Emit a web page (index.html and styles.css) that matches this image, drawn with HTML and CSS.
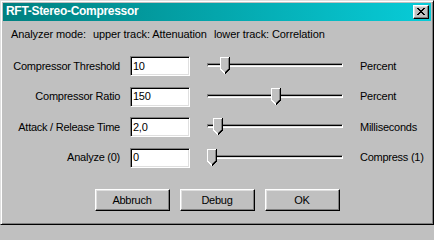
FILE: index.html
```html
<!DOCTYPE html>
<html>
<head>
<meta charset="utf-8">
<link rel="stylesheet" href="styles.css">
</head>
<body>
<div class="window">
  <div class="titlebar">
    <span class="title">RFT-Stereo-Compressor</span>
    <span class="close">
      <svg width="8" height="7" viewBox="0 0 8 7" shape-rendering="crispEdges">
        <path fill="#000" d="M0 0h2v1h-2zM6 0h2v1h-2zM1 1h2v1h-2zM5 1h2v1h-2zM2 2h4v1h-4zM3 3h2v1h-2zM2 4h4v1h-4zM1 5h2v1h-2zM5 5h2v1h-2zM0 6h2v1h-2zM6 6h2v1h-2z"/>
      </svg>
    </span>
  </div>
  <div class="content">
    <div class="mode">
      <span>Analyzer mode:</span>
      <span>upper track: Attenuation</span>
      <span>lower track: Correlation</span>
    </div>
    <div class="rows">
      <span class="lbl">Compressor Threshold</span>
      <div class="field">10</div>
      <div class="slider"><div class="track"></div><svg class="thumb" style="left:20px" width="10" height="17" viewBox="0 0 10 17"><use href="#thumb"/></svg></div>
      <span class="unit">Percent</span>

      <span class="lbl">Compressor Ratio</span>
      <div class="field">150</div>
      <div class="slider"><div class="track"></div><svg class="thumb" style="left:71px" width="10" height="17" viewBox="0 0 10 17"><use href="#thumb"/></svg></div>
      <span class="unit">Percent</span>

      <span class="lbl">Attack / Release Time</span>
      <div class="field">2,0</div>
      <div class="slider"><div class="track"></div><svg class="thumb" style="left:13px" width="10" height="17" viewBox="0 0 10 17"><use href="#thumb"/></svg></div>
      <span class="unit">Milliseconds</span>

      <span class="lbl">Analyze (0)</span>
      <div class="field">0</div>
      <div class="slider"><div class="track"></div><svg class="thumb" style="left:7px" width="10" height="17" viewBox="0 0 10 17"><use href="#thumb"/></svg></div>
      <span class="unit">Compress (1)</span>
    </div>
    <div class="buttons">
      <div class="btn">Abbruch</div>
      <div class="btn">Debug</div>
      <div class="btn">OK</div>
    </div>
  </div>
</div>
<svg width="0" height="0" class="defs">
  <defs>
    <g id="thumb" shape-rendering="crispEdges">
      <polygon points="0,0 10,0 10,12 5,17 0,12" fill="#c0c0c0"/>
      <path d="M0.5 12V0.5H9" stroke="#fff" fill="none"/>
      <path d="M0.5 12L5 16.5" stroke="#fff" fill="none"/>
      <path d="M8.5 1V12L5 15.5" stroke="#808080" fill="none"/>
      <path d="M9.5 0V12L5 16.5" stroke="#000" fill="none"/>
    </g>
  </defs>
</svg>
</body>
</html>
```
FILE: styles.css
```css
html, body {
  margin: 0;
  padding: 0;
  background: #c0c0c0;
}
* { box-sizing: border-box; }
.defs { position: absolute; }

.window {
  width: 434px;
  height: 225px;
  background: #c0c0c0;
  border: 1px solid;
  border-color: #dfdfdf #000 #000 #dfdfdf;
  box-shadow: inset 1px 1px #fff, inset -1px -1px #808080;
  padding: 2px;
  font-family: "Liberation Sans", Arial, sans-serif;
  font-size: 11px;
  letter-spacing: -0.25px;
  color: #000;
}

.titlebar {
  height: 18px;
  display: flex;
  align-items: center;
  padding: 0 2px 2px 3px;
  background: linear-gradient(to right, #008080, #08ccd8);
}
.title {
  color: #fff;
  font-weight: bold;
  font-size: 12px;
  letter-spacing: -0.3px;
  line-height: 14px;
}
.close {
  margin-left: auto;
  margin-top: 2px;
  width: 16px;
  height: 14px;
  background: #c0c0c0;
  border: 1px solid;
  border-color: #fff #000 #000 #fff;
  box-shadow: inset -1px -1px #808080, inset 1px 1px #dfdfdf;
  display: flex;
  align-items: flex-start;
  justify-content: flex-start;
  padding: 2px 0 0 3px;
}
.close svg { display: block; }

.content {
  padding-top: 7px;
}
.mode {
  display: grid;
  grid-template-columns: 82px 121px auto;
  padding-left: 8px;
  line-height: 13px;
  letter-spacing: -0.1px;
  white-space: nowrap;
}

.rows {
  margin-top: 15px;
  display: grid;
  grid-template-columns: 117px 60px 150px auto;
  grid-auto-rows: 20px;
  column-gap: 10px;
  row-gap: 10.67px;
  align-items: center;
  line-height: 13px;
}
.lbl {
  text-align: right;
  white-space: nowrap;
}
.field {
  height: 20px;
  background: #fff;
  border: 1px solid;
  border-color: #808080 #fff #fff #808080;
  box-shadow: inset 1px 1px #000, inset -1px -1px #dfdfdf;
  padding-left: 2px;
  display: flex;
  align-items: center;
}
.slider {
  position: relative;
  height: 20px;
  padding-top: 7px;
  padding-left: 7px;
}
.track {
  width: 136px;
  height: 4px;
  border: 1px solid;
  border-color: #808080 #fff #fff #808080;
  background: linear-gradient(#000 0 1px, #dfdfdf 1px);
}
.thumb {
  position: absolute;
  top: 1px;
  display: block;
}
.unit {
  white-space: nowrap;
}

.buttons {
  margin-top: 21px;
  display: flex;
  justify-content: center;
  gap: 10px;
}
.btn {
  width: 75px;
  height: 22px;
  border: 1px solid;
  border-color: #fff #000 #000 #fff;
  box-shadow: inset -1px -1px #808080, inset 1px 1px #dfdfdf;
  display: flex;
  align-items: center;
  justify-content: center;
}
```
